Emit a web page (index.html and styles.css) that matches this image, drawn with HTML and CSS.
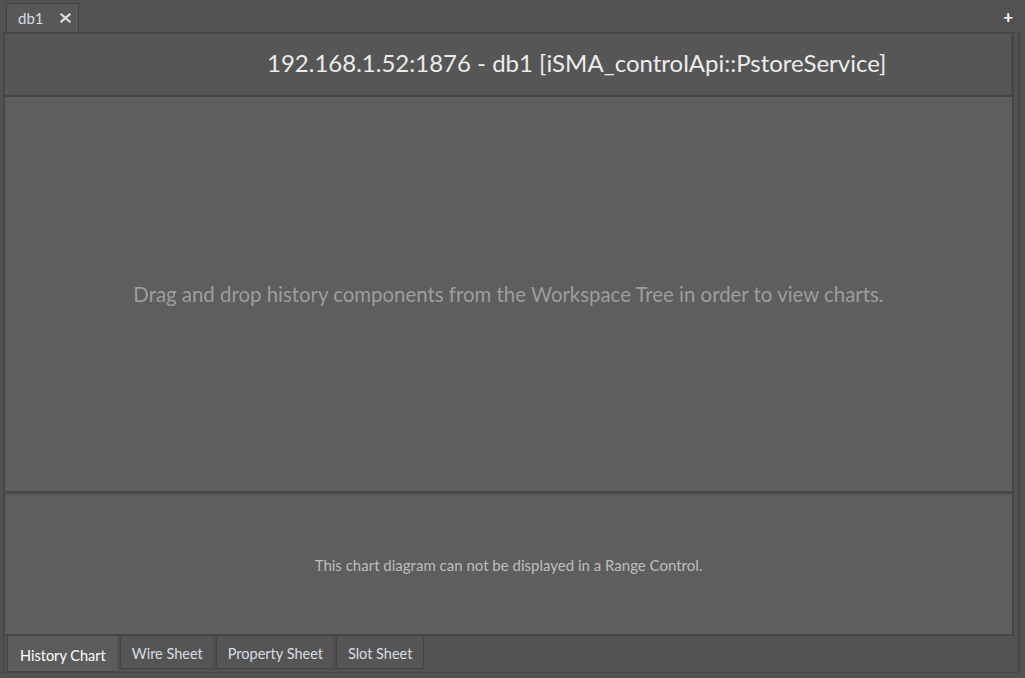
FILE: index.html
```html
<!DOCTYPE html>
<html lang="en">
<head>
    <meta charset="UTF-8">
    <title>db1 - History Chart</title>
    <link rel="stylesheet" href="styles.css">
</head>
<body>

<div class="tabbar">
    <div class="doc-tab">
        <span class="doc-tab-name">db1</span>
        <svg class="doc-tab-close" width="11" height="10" viewBox="0 0 11 10">
            <path d="M1.5 1.5 L9.5 8.5 M9.5 1.5 L1.5 8.5" stroke="#dcdcdc" stroke-width="2.2" stroke-linecap="square"/>
        </svg>
    </div>
    <span class="tab-add">+</span>
</div>

<div class="frame">
    <div class="view">
        <div class="view-header">
            <h1 class="view-title">192.168.1.52:1876 - db1 [iSMA_controlApi::PstoreService]</h1>
        </div>
        <div class="chart-area">
            <p class="chart-hint">Drag and drop history components from the Workspace Tree in order to view charts.</p>
        </div>
        <div class="range-area">
            <p class="range-hint">This chart diagram can not be displayed in a Range Control.</p>
        </div>
    </div>
    <div class="view-tabs">
        <div class="view-tab active">History Chart</div>
        <div class="view-tab">Wire Sheet</div>
        <div class="view-tab">Property Sheet</div>
        <div class="view-tab">Slot Sheet</div>
    </div>
</div>

</body>
</html>
```

FILE: styles.css
```css
body {
    margin: 0;
    height: 678px;
    background-color: #525252;
    font-family: Lato, "Open Sans", sans-serif;
    overflow: hidden;
}

.tabbar {
    height: 32px;
    display: flex;
    align-items: flex-end;
    padding-left: 6px;
    padding-right: 12px;
    box-sizing: border-box;
}

.doc-tab {
    width: 73px;
    height: 29px;
    box-sizing: border-box;
    border: 1px solid #434343;
    border-bottom: none;
    background-color: #585858;
    display: flex;
    align-items: center;
    padding-left: 11px;
    gap: 16px;
}

.doc-tab-name {
    color: #d6dde6;
    font-size: 15px;
}

.doc-tab-close {
    display: block;
}

.tab-add {
    margin-left: auto;
    align-self: center;
    color: #ffffff;
    font-size: 17px;
    font-weight: bold;
    line-height: 1;
}

.frame {
    margin: 0 5px 0 3px;
    height: 641px;
    box-sizing: border-box;
    border: 1px solid #464646;
    border-right: 2px solid #464646;
    display: flex;
    flex-direction: column;
}

.view {
    margin-right: 4px;
    border-right: 2px solid #474747;
    display: flex;
    flex-direction: column;
}

.view-header {
    height: 64px;
    box-sizing: border-box;
    background-color: #565656;
    border: 1px solid #484848;
    border-bottom: 2px solid #454545;
    display: flex;
    align-items: center;
    padding-left: 262px;
    padding-bottom: 5px;
}

.view-title {
    margin: 0;
    font-weight: normal;
    font-size: 24px;
    color: #ececec;
}

.chart-area {
    height: 396px;
    box-sizing: border-box;
    background-color: #5e5e5e;
    border-left: 1px solid #484848;
    border-bottom: 2px solid #474747;
    display: flex;
    align-items: center;
    justify-content: center;
}

.chart-hint {
    margin: 0;
    font-size: 20.4px;
    color: #9d9d9d;
}

.range-area {
    height: 143px;
    box-sizing: border-box;
    background-color: #5e5e5e;
    border-top: 2px solid #525252;
    border-left: 1px solid #484848;
    border-bottom: 2px solid #474747;
    display: flex;
    align-items: center;
    justify-content: center;
}

.range-hint {
    margin: 0;
    font-size: 15px;
    color: #bdbdbd;
}

.view-tabs {
    display: flex;
    align-items: flex-start;
    padding-left: 3px;
    gap: 1px;
}

.view-tab {
    height: 33px;
    box-sizing: border-box;
    padding: 2px 11px 0;
    border: 1px solid #474747;
    border-top: none;
    background-color: #555555;
    color: #d8dde4;
    font-size: 14.5px;
    display: flex;
    align-items: center;
}

.view-tab.active {
    height: 36px;
    padding: 3px 12px 0;
    background-color: #5c5c5c;
    color: #ffffff;
}
```
